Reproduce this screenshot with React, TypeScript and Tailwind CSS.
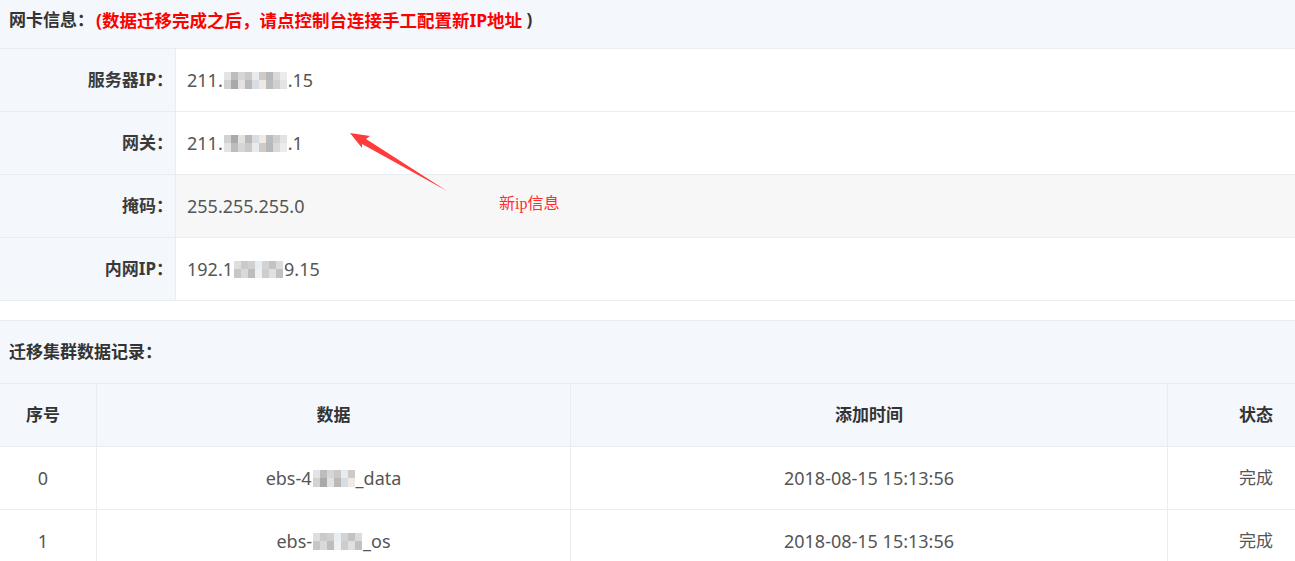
import React from "react";

// pixelated blur blocks (masked parts of the IP)
const Blur = ({ cells, top, bottom }: { cells: number; top: string[]; bottom: string[] }) => (
  <span className="inline-flex flex-col align-middle mx-[1px]">
    <span className="flex">
      {Array.from({ length: cells }).map((_, i) => (
        <span key={i} className="w-[7px] h-[8px]" style={{ background: top[i % top.length] }} />
      ))}
    </span>
    <span className="flex">
      {Array.from({ length: cells }).map((_, i) => (
        <span key={i} className="w-[7px] h-[9px]" style={{ background: bottom[i % bottom.length] }} />
      ))}
    </span>
  </span>
);

const g1 = ["#e4e4e4", "#bdbdbd", "#d6d6d6", "#c9c9c9", "#e8ebee", "#cfcac5", "#b8b8b8", "#d9d9d9", "#ececec"];
const g2 = ["#d2d2d2", "#a9a9a9", "#e2e2e2", "#b9b9b9", "#d8dde3", "#efeae5", "#bcbcbc", "#cfcfcf", "#e3e3e3"];
const g3 = ["#dedede", "#cacaca", "#d0d0d0", "#e6edf3", "#d3d3d3", "#c3c3c3", "#dcdcdc"];
const g4 = ["#c7c7c7", "#d9d9d9", "#bdbdbd", "#f0f0f0", "#cdcdcd", "#e0e0e0", "#c1c1c1"];

const rows = [
  { label: "服务器IP：", value: <>211.<Blur cells={9} top={g1} bottom={g2} />.15</>, bg: "bg-white" },
  { label: "网关：", value: <>211.<Blur cells={9} top={g2} bottom={g1} />.1</>, bg: "bg-white" },
  { label: "掩码：", value: <>255.255.255.0</>, bg: "bg-[#f7f7f7]" },
  { label: "内网IP：", value: <>192.1<Blur cells={7} top={g3} bottom={g4} />9.15</>, bg: "bg-white" },
];

const records = [
  { id: 0, data: <>ebs-4<Blur cells={6} top={g1} bottom={g2} />_data</>, time: "2018-08-15 15:13:56", status: "完成" },
  { id: 1, data: <>ebs-<Blur cells={7} top={g3} bottom={g4} />_os</>, time: "2018-08-15 15:13:56", status: "完成" },
];

export default function App() {
  return (
    <div
      className="relative w-[1295px] h-[561px] overflow-hidden bg-white text-[#606266]"
      style={{ fontFamily: '"Noto Sans", "Noto Sans CJK SC", sans-serif' }}
    >
      {/* 网卡信息 */}
      <div className="h-[49px] bg-[#f4f7fc] border-b border-[#e9ecf1] flex items-start pt-[7px] pl-[9px] text-[17px] font-bold text-[#333]">
        网卡信息：<span className="text-[#ff0000] text-[17.5px] ml-[2px]">(数据迁移完成之后，请点控制台连接手工配置新IP地址 </span>
        <span>&nbsp;)</span>
      </div>
      {rows.map((r) => (
        <div key={r.label} className="h-[63px] flex border-b border-[#e9ecf1]">
          <div className="w-[176px] shrink-0 bg-[#f4f7fc] border-r border-[#e9ecf1] flex items-center justify-end pr-[2px] text-[17px] font-bold text-[#3a3a3a]">
            {r.label}
          </div>
          <div className={`flex-1 flex items-center pl-[11px] text-[18px] text-[#555] ${r.bg}`}>{r.value}</div>
        </div>
      ))}

      <div className="h-[20px] border-b border-[#e9ecf1]" />

      {/* 迁移集群数据记录 */}
      <div className="h-[63px] bg-[#f4f7fc] border-b border-[#e9ecf1] flex items-center pl-[9px] text-[17px] font-bold text-[#333]">
        迁移集群数据记录：
      </div>
      <div className="grid grid-cols-[97px_474px_597px_1fr] h-[63px] bg-[#f4f7fc] border-b border-[#e9ecf1] text-[17px] font-bold text-[#333]">
        <div className="flex items-center justify-center pr-[10px] border-r border-[#e9ecf1]">序号</div>
        <div className="flex items-center justify-center border-r border-[#e9ecf1]">数据</div>
        <div className="flex items-center justify-center border-r border-[#e9ecf1]">添加时间</div>
        <div className="flex items-center justify-end pr-[22px]">状态</div>
      </div>
      {records.map((r) => (
        <div key={r.id} className="grid grid-cols-[97px_474px_597px_1fr] h-[63px] border-b border-[#e9ecf1] text-[18px] text-[#555]">
          <div className="flex items-center justify-center pr-[10px] border-r border-[#e9ecf1]">{r.id}</div>
          <div className="flex items-center justify-center border-r border-[#e9ecf1]">{r.data}</div>
          <div className="flex items-center justify-center border-r border-[#e9ecf1]">{r.time}</div>
          <div className="flex items-center justify-end pr-[22px] text-[17px]">{r.status}</div>
        </div>
      ))}

      {/* annotation arrow */}
      <svg className="absolute left-0 top-0 pointer-events-none" width="1295" height="561">
        <polygon points="350,133 370,136 366,139 447,191 362,144 362,148" fill="#ff3b3b" />
      </svg>
      <div
        className="absolute left-[499px] top-[192px] text-[16px] text-[#ff2d2d]"
        style={{ fontFamily: '"Liberation Serif", "Noto Sans CJK SC", serif' }}
      >
        新ip信息
      </div>
    </div>
  );
}
